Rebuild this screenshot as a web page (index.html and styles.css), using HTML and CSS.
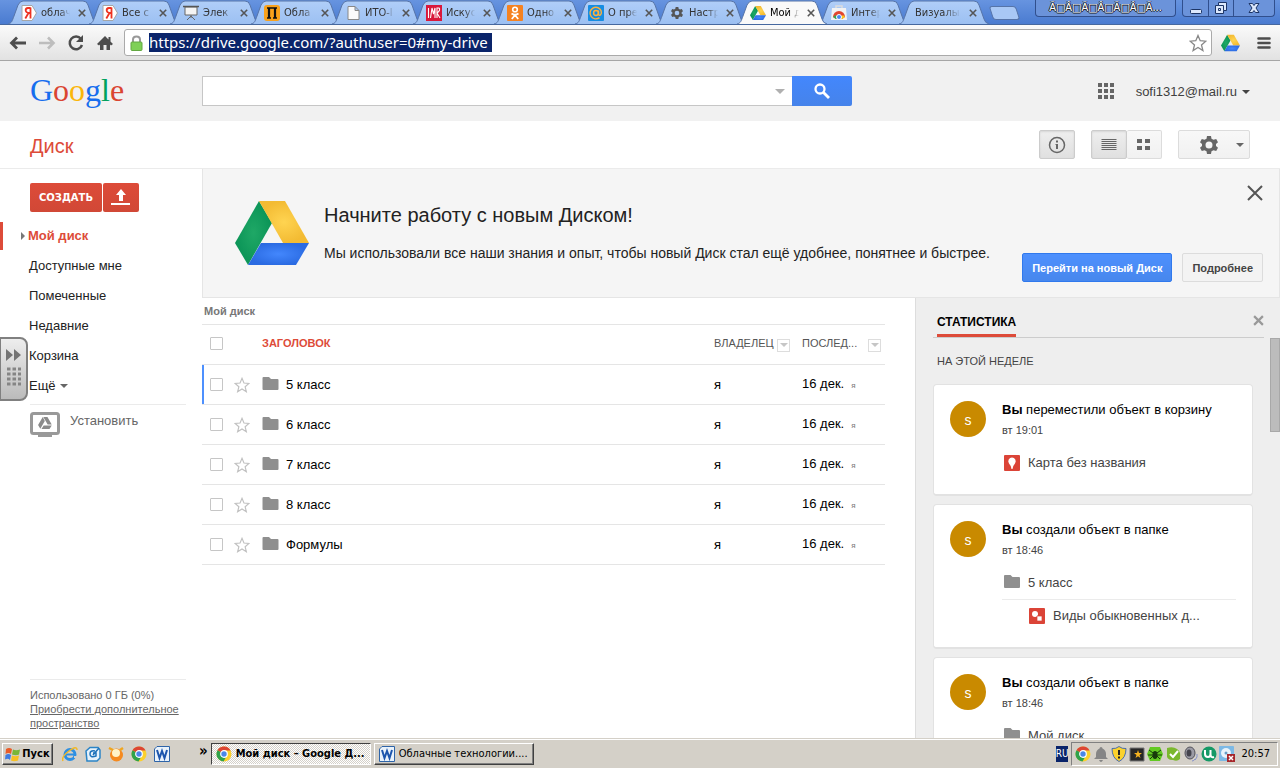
FILE: index.html
```html
<!DOCTYPE html>
<html lang="ru">
<head>
<meta charset="utf-8">
<title>Мой диск – Google Диск</title>
<link rel="stylesheet" href="styles.css">
</head>
<body>
<svg class="defs" aria-hidden="true">
  <defs>
    <linearGradient id="tabFill" x1="0" y1="0" x2="0" y2="1"><stop offset="0" stop-color="#b0cef8"/><stop offset="1" stop-color="#9cc0f2"/></linearGradient>
    <radialGradient id="driveGreen"><stop offset="0" stop-color="#1fa866"/><stop offset="1" stop-color="#0b9457"/></radialGradient>
    <radialGradient id="driveYellow"><stop offset="0" stop-color="#ffd451"/><stop offset="1" stop-color="#f3bb33"/></radialGradient>
    <radialGradient id="driveBlue"><stop offset="0" stop-color="#4387fd"/><stop offset="1" stop-color="#2b6be2"/></radialGradient>
  </defs>
  <symbol id="tab" viewBox="0 0 90 24" preserveAspectRatio="none"><path d="M0 24C4 23 4 21 6 16L10 5Q12 1 15 1H75Q79 1 80 5L85 19Q86 23 90 24" stroke="#5674a8"/></symbol>
  <symbol id="drive" viewBox="0 0 74 64">
    <path d="M24 0L0 42L13 64L37 22Z" fill="url(#driveGreen)"/>
    <path d="M24 0H50L74 42H48Z" fill="url(#driveYellow)"/>
    <path d="M26 42H74L61 64H13Z" fill="url(#driveBlue)"/>
  </symbol>
  <symbol id="driveMono" viewBox="0 0 74 64"><path d="M25 0L0 42L12 63L36 21ZM28 0H50L73 40H51ZM30 45H73L61 64H18Z"/></symbol>
  <symbol id="yandex" viewBox="0 0 16 16"><path d="M1 .5H11L15.500 8L11 15.500H1Z" fill="#fff" stroke="#a6a6a6"/><path d="M9.500 2.500V13.500M9.500 3H7Q4.500 3.300 4.700 5.500Q5 8 9 8M7.500 8L4.300 13.500" fill="none" stroke="#e32" stroke-width="1.800"/></symbol>
  <symbol id="board" viewBox="0 0 16 16"><path d="M2 2H14V10H2Z" fill="#f4f4f4" stroke="#666"/><path d="M0 1.500H16" stroke="#555" stroke-width="1.500"/><path d="M8 10V13M8 11L4 15M8 11L12 15" stroke="#666" fill="none"/></symbol>
  <symbol id="pi" viewBox="0 0 16 16"><rect width="16" height="16" rx="3" fill="#f9a11b"/><path d="M3 3H13M3 13H7M9 13H13" stroke="#111" stroke-width="1.300"/><path d="M5 3V13M11 3V13" stroke="#111" stroke-width="2.200"/></symbol>
  <symbol id="page" viewBox="0 0 16 16"><path d="M3 1.500H10L14 5.500V14.500H3ZM10 1.500V5.500H14" fill="#fafafa" stroke="#888"/></symbol>
  <symbol id="imr" viewBox="0 0 16 16"><rect width="16" height="16" fill="#d9183b"/><path d="M2.500 3V13M4.500 13L6 3L7.500 9L9 3V13M11 13V3H13Q15 5 11 8L14 13" fill="none" stroke="#fff" stroke-width="1.100"/></symbol>
  <symbol id="ok" viewBox="0 0 16 16"><rect width="16" height="16" rx="1" fill="#f58220"/><circle cx="8" cy="4.500" r="2.300" fill="none" stroke="#fff" stroke-width="1.600"/><path d="M4.500 8.500Q8 11 11.500 8.500M8 10L4.800 14M8 10L11.200 14" fill="none" stroke="#fff" stroke-width="1.800"/></symbol>
  <symbol id="at" viewBox="0 0 16 16"><rect width="16" height="16" rx="1" fill="#168de2"/><circle cx="8" cy="8" r="2.400" fill="none" stroke="#ffb13c" stroke-width="1.500"/><path d="M10.500 5.500V9Q11 11 12.500 10Q14 8 13 5.500A5.800 5.800 0 1 0 11.500 12.600" fill="none" stroke="#ffb13c" stroke-width="1.400"/></symbol>
  <symbol id="gear" viewBox="0 0 18 18"><path fill-rule="evenodd" d="M7 0H11L11.500 2.700L13.500 3.800L16.200 2.900L18 6.200L16 8V10L18 11.800L16.200 15.100L13.500 14.200L11.500 15.300L11 18H7L6.500 15.300L4.500 14.200L1.800 15.100L0 11.800L2 10V8L0 6.200L1.800 2.900L4.500 3.800L6.500 2.700ZM9 5.500A3.500 3.500 0 1 0 9 12.500A3.500 3.500 0 1 0 9 5.500Z"/></symbol>
  <symbol id="store" viewBox="0 0 16 16"><path d="M5 3V1H11V3" fill="none" stroke="#ddd" stroke-width="1.500"/><path d="M1 3H15L16 15H0Z" fill="#f2f2f2"/><path d="M2 12A6 6 0 0 1 14 12L11 14H5Z" fill="#e2452f"/><path d="M2 12L5 14H8L5 10Z" fill="#35a854"/><path d="M14 12L11 14H8L12 10Z" fill="#fbc816"/><circle cx="8" cy="12" r="2.500" fill="#4688f1" stroke="#fff"/></symbol>
  <symbol id="cross" viewBox="0 0 10 10"><path d="M1 1L9 9M9 1L1 9" fill="none" stroke="currentColor" stroke-width="2"/></symbol>
  <symbol id="star" viewBox="0 0 18 18"><path d="M9 1.500L11.200 6.700L16.800 7.200L12.500 10.900L13.900 16.500L9 13.500L4.100 16.500L5.500 10.900L1.200 7.200L6.800 6.700Z" fill="none" stroke="currentColor" stroke-width="1.300"/></symbol>
  <symbol id="folder" viewBox="0 0 16 13"><path d="M0 1Q0 0 1 0H6.500L8.500 2H15Q16 2 16 3V12Q16 13 15 13H1Q0 13 0 12Z" fill="#8f8f8f"/></symbol>
  <symbol id="chrome" viewBox="0 0 16 16"><circle cx="8" cy="8" r="7.500" fill="#fbd02c"/><path d="M8 8L1.500 4.200A7.500 7.500 0 0 1 14.600 4.500H8Z" fill="#dc4634"/><path d="M8 8L1.500 4.200A7.500 7.500 0 0 0 7.500 15.500L11 9.500Z" fill="#2fa24b"/><circle cx="8" cy="8" r="3.300" fill="#4a87e8" stroke="#fff" stroke-width="1.200"/></symbol>
  <symbol id="word" viewBox="0 0 16 16"><path d="M3 .5H15.500V15.500H.5V3Z" fill="#e9f2fb" stroke="#2e64a8"/><path d="M3 4L5.500 12L8 5L10.500 12L13 4" fill="none" stroke="#1c55ad" stroke-width="2"/></symbol>
  <symbol id="winflag" viewBox="0 0 16 16"><path d="M1 3Q4 1 7 3L6 8Q3.500 6 .5 8Z" fill="#ea5b27"/><path d="M8 3.500Q11 5 15 3.500L14 8.500Q11 10 7 8.500Z" fill="#79b637"/><path d="M.5 9Q3.500 7 6 9L5 14Q3 12 0 13.500Z" fill="#3f7be0"/><path d="M7 9.500Q10 11 14 9.500L13 14.500Q9 16 6 14.500Z" fill="#f8c022"/></symbol>
</svg>

<header class="browser">
  <div class="titlebar">
    <nav class="tabs" aria-label="Вкладки">
      <div class="tab"><svg class="tab-shape"><use href="#tab"/></svg><svg class="fav"><use href="#yandex"/></svg><span class="tab-text">облач</span><button class="tab-close" aria-label="Закрыть"><svg><use href="#cross"/></svg></button></div>
      <div class="tab"><svg class="tab-shape"><use href="#tab"/></svg><svg class="fav"><use href="#yandex"/></svg><span class="tab-text">Все с</span><button class="tab-close" aria-label="Закрыть"><svg><use href="#cross"/></svg></button></div>
      <div class="tab"><svg class="tab-shape"><use href="#tab"/></svg><svg class="fav"><use href="#board"/></svg><span class="tab-text">Элек</span><button class="tab-close" aria-label="Закрыть"><svg><use href="#cross"/></svg></button></div>
      <div class="tab"><svg class="tab-shape"><use href="#tab"/></svg><svg class="fav"><use href="#pi"/></svg><span class="tab-text">Обла</span><button class="tab-close" aria-label="Закрыть"><svg><use href="#cross"/></svg></button></div>
      <div class="tab"><svg class="tab-shape"><use href="#tab"/></svg><svg class="fav"><use href="#page"/></svg><span class="tab-text">ИТО-I</span><button class="tab-close" aria-label="Закрыть"><svg><use href="#cross"/></svg></button></div>
      <div class="tab"><svg class="tab-shape"><use href="#tab"/></svg><svg class="fav"><use href="#imr"/></svg><span class="tab-text">Искус</span><button class="tab-close" aria-label="Закрыть"><svg><use href="#cross"/></svg></button></div>
      <div class="tab"><svg class="tab-shape"><use href="#tab"/></svg><svg class="fav"><use href="#ok"/></svg><span class="tab-text">Одно</span><button class="tab-close" aria-label="Закрыть"><svg><use href="#cross"/></svg></button></div>
      <div class="tab"><svg class="tab-shape"><use href="#tab"/></svg><svg class="fav"><use href="#at"/></svg><span class="tab-text">О пре</span><button class="tab-close" aria-label="Закрыть"><svg><use href="#cross"/></svg></button></div>
      <div class="tab"><svg class="tab-shape"><use href="#tab"/></svg><svg class="fav fav-gear"><use href="#gear"/></svg><span class="tab-text">Настр</span><button class="tab-close" aria-label="Закрыть"><svg><use href="#cross"/></svg></button></div>
      <div class="tab active"><svg class="tab-shape"><use href="#tab"/></svg><svg class="fav"><use href="#drive"/></svg><span class="tab-text">Мой д</span><button class="tab-close" aria-label="Закрыть"><svg><use href="#cross"/></svg></button></div>
      <div class="tab"><svg class="tab-shape"><use href="#tab"/></svg><svg class="fav"><use href="#store"/></svg><span class="tab-text">Интер</span><button class="tab-close" aria-label="Закрыть"><svg><use href="#cross"/></svg></button></div>
      <div class="tab"><svg class="tab-shape"><use href="#tab"/></svg><span class="tab-text wide">Визуалы</span><button class="tab-close" aria-label="Закрыть"><svg><use href="#cross"/></svg></button></div>
      <button class="new-tab" aria-label="Новая вкладка"></button>
    </nav>
    <button class="profile">Ã□Â□Ã□Â□Ã□Â□Ã...</button>
    <div class="window-buttons">
      <button aria-label="Свернуть"><svg viewBox="0 0 14 14"><rect x="1.500" y="8.500" width="11" height="4" rx="1" fill="#dce8fc" stroke="#1d3566"/></svg></button>
      <button aria-label="Восстановить"><svg viewBox="0 0 14 14"><path d="M4.500 1.500H12.500V9.500H9.500V12.500H1.500V4.500H4.500Z" fill="#dce8fc" stroke="#1d3566"/><path d="M4.500 4.500H9.500V9.500M4.500 7.500H6.500V9.500H4.500Z" fill="none" stroke="#1d3566"/></svg></button>
      <button class="close-window" aria-label="Закрыть окно"><svg viewBox="0 0 14 14"><path d="M2 2.500H5.500L7 4.500L8.500 2.500H12L9 7L12 11.500H8.500L7 9.500L5.500 11.500H2L5 7Z" fill="#dce8fc" stroke="#1d3566"/></svg></button>
    </div>
  </div>
  <div class="toolbar">
    <button class="nav-button" aria-label="Назад"><svg viewBox="0 0 18 18"><path d="M17 9H3M8 3.500L2.500 9L8 14.500" fill="none" stroke="#4d4d4d" stroke-width="2.800"/></svg></button>
    <button class="nav-button" aria-label="Вперёд"><svg viewBox="0 0 18 18"><path d="M1 9H15M10 3.500L15.500 9L10 14.500" fill="none" stroke="#bdbdbd" stroke-width="2.600"/></svg></button>
    <button class="nav-button" aria-label="Обновить"><svg viewBox="0 0 18 18"><path d="M14 5A6.300 6.300 0 1 0 15 11" fill="none" stroke="#4d4d4d" stroke-width="2.500"/><path d="M16 1V8H9Z" fill="#4d4d4d"/></svg></button>
    <button class="nav-button" aria-label="Домой"><svg viewBox="0 0 18 18"><path d="M9 2L1 10L3 11.500L4 10.500V16H7.500V11H10.500V16H14V10.500L15 11.500L17 10L14.500 7.500V3H12.500V5.500Z" fill="#4d4d4d"/></svg></button>
    <form class="omnibox">
      <svg class="lock" viewBox="0 0 13 16"><path d="M3 8V4.500Q3 1.500 6.500 1.500Q10 1.500 10 4.500V8" fill="none" stroke="#999" stroke-width="2"/><rect x="1" y="7" width="11" height="8.500" rx="1" fill="#7fd057" stroke="#63a842"/></svg>
      <a class="url" href="#my-drive">https://drive.google.com/?authuser=0#my-drive</a>
      <button type="button" class="bookmark" aria-label="Закладка"><svg><use href="#star"/></svg></button>
    </form>
    <button class="ext" aria-label="Google Диск"><svg><use href="#drive"/></svg></button>
    <button class="menu" aria-label="Меню"><svg viewBox="0 0 14 14"><path d="M1.500 2.500H12.500M1.500 7H12.500M1.500 11.500H12.500" stroke="#4d4d4d" stroke-width="2.600" stroke-linecap="round"/></svg></button>
  </div>
</header>

<div class="google-bar">
  <a class="logo" href="#google" aria-label="Google"><span class="g-blue">G</span><span class="g-red">o</span><span class="g-yellow">o</span><span class="g-blue">g</span><span class="g-green">l</span><span class="g-red">e</span></a>
  <form class="search">
    <div class="search-box"><input type="text" aria-label="Поиск на Диске"><button type="button" class="search-options" aria-label="Параметры поиска"><span class="caret"></span></button></div>
    <button type="button" class="search-go" aria-label="Поиск"><svg viewBox="0 0 16 16"><circle cx="6" cy="6" r="4.500" fill="none" stroke="#fff" stroke-width="2.300"/><path d="M9.500 9.500L15 15" stroke="#fff" stroke-width="2.800"/></svg></button>
  </form>
  <div class="account">
    <button aria-label="Приложения"><svg class="apps" viewBox="0 0 16 16"><path d="M0 0H4V4H0ZM6 0H10V4H6ZM12 0H16V4H12ZM0 6H4V10H0ZM6 6H10V10H6ZM12 6H16V10H12ZM0 12H4V16H0ZM6 12H10V16H6ZM12 12H16V16H12Z" fill="#666"/></svg></button>
    <button class="email">sofi1312@mail.ru <span class="caret dark"></span></button>
  </div>
</div>

<div class="title-row">
  <h1>Диск</h1>
  <div class="tools">
    <button class="tool pressed" aria-label="Информация"><svg viewBox="0 0 18 18"><circle cx="9" cy="9" r="7.500" fill="none" stroke="#666" stroke-width="1.500"/><path d="M8 4.500H10V6.500H8ZM7.500 8H10V13H8V9H7.500Z" fill="#666"/></svg></button>
    <div class="tool-pair">
      <button class="tool pressed" aria-label="Список"><svg viewBox="0 0 18 18"><path d="M1.500 3.500H16.500M1.500 5.500H16.500M1.500 7.500H16.500M1.500 9.500H16.500M1.500 11.500H16.500M1.500 13.500H16.500" stroke="#666"/></svg></button>
      <button class="tool" aria-label="Сетка"><svg viewBox="0 0 18 18"><path d="M2 3H7V7H2ZM10 3H15V7H10ZM2 10H7V14H2ZM10 10H15V14H10Z" fill="#666"/></svg></button>
    </div>
    <button class="tool settings" aria-label="Настройки"><svg fill="#666"><use href="#gear"/></svg><span class="caret mid"></span></button>
  </div>
</div>

<div class="workspace">
  <aside class="sidebar">
    <div class="create-row">
      <button class="red create">СОЗДАТЬ</button>
      <button class="red upload" aria-label="Загрузить"><svg viewBox="0 0 20 18"><path d="M10 0L15 6H12V12H8V6H5ZM0 14H19V16H0Z" fill="#fff"/></svg></button>
    </div>
    <nav class="folders">
      <a class="current" href="#my"><span class="expander"></span>Мой диск</a>
      <a href="#shared">Доступные мне</a>
      <a href="#starred">Помеченные</a>
      <a href="#recent">Недавние</a>
      <a href="#trash">Корзина</a>
      <a href="#more">Ещё <span class="caret mid"></span></a>
    </nav>
    <a class="install" href="#install"><svg viewBox="0 0 30 26"><rect x="1.500" y="1.500" width="27" height="20" rx="2" fill="#fff" stroke="#999" stroke-width="3"/><path d="M12 22H18V23H22V25H8V23H12Z" fill="#999"/><use href="#driveMono" x="8" y="5" width="14" height="12" fill="#8a8a8a"/></svg>Установить</a>
    <div class="quota">Использовано 0 ГБ (0%)<br><a href="#buy">Приобрести дополнительное пространство</a></div>
    <button class="drawer" aria-label="Панель"><svg viewBox="0 0 28 64"><path d="M6 12L13 18L6 24ZM14 12L21 18L14 24Z" fill="#747474"/><path d="M7 32H21M7 37H21M7 42H21M7 47H21" stroke="#858585" stroke-width="3" stroke-dasharray="3.500 2"/></svg></button>
  </aside>

  <div class="main">
    <section class="promo">
      <svg class="promo-logo"><use href="#drive"/></svg>
      <div class="promo-text"><h2>Начните работу с новым Диском!</h2><p>Мы использовали все наши знания и опыт, чтобы новый Диск стал ещё удобнее, понятнее и быстрее.</p></div>
      <div class="promo-side">
        <button class="promo-close" aria-label="Закрыть"><svg viewBox="0 0 16 16"><path d="M1 1L15 15M15 1L1 15" stroke="#555" stroke-width="2"/></svg></button>
        <div class="promo-buttons"><button class="blue">Перейти на новый Диск</button><button class="plain">Подробнее</button></div>
      </div>
    </section>
    <div class="columns">
      <main class="files">
        <div class="crumb">Мой диск</div>
        <table>
          <colgroup><col class="c-check"><col class="c-star"><col><col class="c-owner"><col class="c-date"></colgroup>
          <thead><tr><th><input type="checkbox" aria-label="Выбрать все"></th><th></th><th class="heading">ЗАГОЛОВОК</th><th><span class="sort">ВЛАДЕЛЕЦ<button aria-label="Сортировать по владельцу"><span class="caret"></span></button></span></th><th><span class="sort">ПОСЛЕД...<button aria-label="Сортировать по дате"><span class="caret"></span></button></span></th></tr></thead>
          <tbody>
            <tr class="focused"><td><input type="checkbox" aria-label="5 класс"></td><td><button class="star" aria-label="Пометить"><svg><use href="#star"/></svg></button></td><td><a class="file" href="#5"><svg><use href="#folder"/></svg>5 класс</a></td><td>я</td><td><span class="date">16 дек. <small>я</small></span></td></tr>
            <tr><td><input type="checkbox" aria-label="6 класс"></td><td><button class="star" aria-label="Пометить"><svg><use href="#star"/></svg></button></td><td><a class="file" href="#6"><svg><use href="#folder"/></svg>6 класс</a></td><td>я</td><td><span class="date">16 дек. <small>я</small></span></td></tr>
            <tr><td><input type="checkbox" aria-label="7 класс"></td><td><button class="star" aria-label="Пометить"><svg><use href="#star"/></svg></button></td><td><a class="file" href="#7"><svg><use href="#folder"/></svg>7 класс</a></td><td>я</td><td><span class="date">16 дек. <small>я</small></span></td></tr>
            <tr><td><input type="checkbox" aria-label="8 класс"></td><td><button class="star" aria-label="Пометить"><svg><use href="#star"/></svg></button></td><td><a class="file" href="#8"><svg><use href="#folder"/></svg>8 класс</a></td><td>я</td><td><span class="date">16 дек. <small>я</small></span></td></tr>
            <tr><td><input type="checkbox" aria-label="Формулы"></td><td><button class="star" aria-label="Пометить"><svg><use href="#star"/></svg></button></td><td><a class="file" href="#f"><svg><use href="#folder"/></svg>Формулы</a></td><td>я</td><td><span class="date">16 дек. <small>я</small></span></td></tr>
          </tbody>
        </table>
      </main>
      <aside class="stats">
        <div class="stats-head"><h3>СТАТИСТИКА</h3><button aria-label="Закрыть"><svg><use href="#cross"/></svg></button></div>
        <div class="stats-body">
          <div class="stats-list">
            <h4>НА ЭТОЙ НЕДЕЛЕ</h4>
            <article class="card"><span class="avatar">s</span><div class="event"><p><b>Вы</b> переместили объект в корзину</p><time>вт 19:01</time>
              <a class="item" href="#map"><svg viewBox="0 0 16 16"><rect width="16" height="16" rx="1" fill="#db4437"/><path d="M8 2.500A3.800 3.800 0 0 1 11 8.500Q9 10.500 8.500 14H7.500Q7 10.500 5 8.500A3.800 3.800 0 0 1 8 2.500Z" fill="#fff"/></svg>Карта без названия</a></div></article>
            <article class="card"><span class="avatar">s</span><div class="event"><p><b>Вы</b> создали объект в папке</p><time>вт 18:46</time>
              <a class="item" href="#5"><svg class="folder"><use href="#folder"/></svg>5 класс</a>
              <a class="item nested" href="#draw"><svg viewBox="0 0 16 16"><rect width="16" height="16" rx="1" fill="#db4437"/><circle cx="6" cy="6" r="3" fill="#fff"/><path d="M8 8H13V13H8Z" fill="#fff" stroke="#db4437" stroke-width=".7"/></svg>Виды обыкновенных д...</a></div></article>
            <article class="card"><span class="avatar">s</span><div class="event"><p><b>Вы</b> создали объект в папке</p><time>вт 18:46</time>
              <a class="item" href="#my"><svg class="folder"><use href="#folder"/></svg>Мой диск</a></div></article>
          </div>
          <div class="scroll-thumb"></div>
        </div>
      </aside>
    </div>
  </div>
</div>

<footer class="taskbar">
  <button class="raised start"><svg><use href="#winflag"/></svg>Пуск</button>
  <div class="quick">
    <button aria-label="Internet Explorer"><svg viewBox="0 0 16 16"><circle cx="8" cy="8.500" r="5" fill="none" stroke="#2d8fe3" stroke-width="3"/><path d="M4 8.500H14" stroke="#2d8fe3" stroke-width="2"/><path d="M12 10H16V12H12Z" fill="#d4d0c8"/><path d="M1 15Q-1 11 7 5Q15 -1 15 4" fill="none" stroke="#f2b92b" stroke-width="1.500"/></svg></button>
    <button aria-label="Рабочий стол"><svg viewBox="0 0 16 16"><path d="M1 5L5 1.500H13L15 4V12L12 15H2Z" fill="#e6f2fb" stroke="#2b84c6" stroke-width="1.500"/><path d="M10 5Q5 4 5 8Q5 12 11 10V7H8M8 9L14 2" fill="none" stroke="#1c72bb" stroke-width="1.500"/></svg></button>
    <button aria-label="Почта"><svg viewBox="0 0 16 16"><circle cx="8.500" cy="9" r="6.500" fill="#f58a1f"/><circle cx="8" cy="7" r="4" fill="#fff3c8"/><path d="M1 2L5 4M15 2L12 4" stroke="#f0a51e" stroke-width="2.500"/></svg></button>
    <button aria-label="Chrome"><svg><use href="#chrome"/></svg></button>
    <button aria-label="Word"><svg><use href="#word"/></svg></button>
  </div>
  <button class="more" aria-label="Ещё значки">»</button>
  <button class="window-task sunken"><svg><use href="#chrome"/></svg><span>Мой диск – Google Д...</span></button>
  <button class="window-task raised"><svg><use href="#word"/></svg><span>Облачные технологии....</span></button>
  <span class="lang">RU</span>
  <div class="tray">
    <svg><use href="#chrome"/></svg>
    <svg viewBox="0 0 16 16"><path d="M8 1Q9.500 1 9.500 2.500Q13 4 13 8V11L15 13H1L3 11V8Q3 4 6.500 2.500Q6.500 1 8 1ZM6 14H10Q9 16 8 16Q7 16 6 14Z" fill="#858585"/></svg>
    <svg viewBox="0 0 16 16"><path d="M8 .5Q11 3 15 2.500Q15 12 8 15.500Q1 12 1 2.500Q5 3 8 .5Z" fill="#fbd22c" stroke="#4a6da8"/><path d="M8 4V9M8 10.500V12.500" stroke="#222" stroke-width="2"/></svg>
    <svg viewBox="0 0 16 16"><path d="M1 2H15V15H1Z" fill="#272727" stroke="#777"/><path d="M9 4L10 7H13L10.500 9L11.500 12L9 10.300L6.500 12L7.500 9L5 7H8Z" fill="#f7b31e"/></svg>
    <svg viewBox="0 0 16 16"><path d="M3 1H13L16 8L13 15H3L0 8Z" fill="#62c922"/><ellipse cx="8" cy="9" rx="2.500" ry="4" fill="#173b0b"/><path d="M2 4L6 7M14 4L10 7M1 9H15M3 13L6 10M13 13L10 10" stroke="#173b0b"/></svg>
    <svg viewBox="0 0 16 16"><path d="M2 2Q8 0 12 3Q16 5 15 13Q12 16 8 14Q1 14 2 8Z" fill="#7bb82f"/><path d="M5 8L8 11L13 5" fill="none" stroke="#fff" stroke-width="2"/></svg>
    <svg viewBox="0 0 16 16"><ellipse cx="7" cy="7" rx="5" ry="6" fill="#9b9ba5" stroke="#51515a"/><ellipse cx="6" cy="7" rx="2.500" ry="3.500" fill="#44444d"/><path d="M12 14Q15 11 14 8M9 15Q11 15 12 13" fill="none" stroke="#8390c8"/></svg>
    <svg viewBox="0 0 16 16"><circle cx="8" cy="8" r="7.500" fill="#159966"/><path d="M4 4V8Q4 11 7 11Q9.500 11 9.500 8V4M9.500 9Q10 12 13 11" fill="none" stroke="#fff" stroke-width="2"/></svg>
    <svg viewBox="0 0 16 16"><rect width="15" height="15" rx="1" fill="#7db9e5"/><circle cx="7" cy="7" r="5" fill="#e8f3fb"/><circle cx="7" cy="7" r="1.500" fill="#679fc7"/><path d="M8 8H16V16H8Z" fill="#a6272b"/><path d="M10 10L14 14M14 10L10 14" stroke="#fff" stroke-width="1.500"/></svg>
    <time>20:57</time>
  </div>
</footer>
</body>
</html>
```

FILE: styles.css
```css
* { box-sizing: border-box; }
html, body { height: 100%; }
body {
  margin: 0;
  display: flex;
  flex-direction: column;
  overflow: hidden;
  background: #fff;
  color: #222;
  font: 13px/20px "Liberation Sans", Arial, sans-serif;
}
button {
  display: inline-flex;
  align-items: center;
  justify-content: center;
  margin: 0;
  padding: 0;
  border: 0;
  background: none;
  color: inherit;
  font: inherit;
  white-space: nowrap;
}
a { color: inherit; text-decoration: none; }
svg { display: block; flex: none; width: 16px; height: 16px; }
h1, h2, h3, h4, p { margin: 0; font-weight: normal; }
.defs { position: absolute; width: 0; height: 0; }
.caret {
  display: inline-block;
  border: 5px solid transparent;
  border-top-color: #b0b0b0;
  border-bottom: 0;
}
.caret.dark, .caret.mid { border-width: 4px 4px 0; border-top-color: #444; }
.caret.mid { border-top-color: #666; }

/* Browser frame */
.browser { flex: none; font-family: "DejaVu Sans Condensed", "DejaVu Sans", sans-serif; }
.titlebar {
  display: flex;
  align-items: flex-start;
  height: 25px;
  padding: 0 5px 0 8px;
  background: linear-gradient(#6794e0, #4a7bd0);
  border-bottom: 1px solid #46689f;
}
.tabs { display: flex; flex: 1; min-width: 0; height: 24px; }
.tab {
  display: flex;
  align-items: center;
  position: relative;
  flex: 0 1 90px;
  min-width: 0;
  margin-right: -9px;
  padding: 2px 12px 0 13px;
  color: #333;
  font-size: 11px;
}
.tab-shape { position: absolute; top: 0; left: 0; width: 100%; height: 24px; fill: url(#tabFill); }
.tab.active { z-index: 1; color: #000; }
.active .tab-shape { fill: #f9f9f9; }
.fav { position: relative; margin-right: 4px; }
.fav-gear { fill: #555; transform: scale(.75); }
.tab-text {
  position: relative;
  flex: 1;
  min-width: 0;
  overflow: hidden;
  white-space: nowrap;
  mask-image: linear-gradient(90deg, #000 65%, transparent);
}
.tab-text.wide { padding-left: 3px; }
.tab-close { position: relative; margin-left: 8px; color: #555; }
.tab-close svg { width: 8px; height: 8px; }
.new-tab {
  width: 27px;
  height: 14px;
  margin: 6px 0 0 11px;
  border: 1px solid #5674a8;
  border-radius: 3px;
  background: #a9c8f5;
  transform: skewX(18deg);
}
.profile, .window-buttons {
  border: 1px solid #304f8d;
  border-top: 0;
  border-radius: 0 0 4px 4px;
  background: #6b93da;
}
.profile { width: 141px; height: 17px; color: #fff; font-size: 11px; text-shadow: 1px 0 #222, -1px 0 #222, 0 1px #222; }
.window-buttons { display: flex; height: 17px; margin-left: 6px; }
.window-buttons button { width: 25px; }
.window-buttons button + button { border-left: 1px solid #304f8d; }
.window-buttons .close-window { width: 41px; }
.window-buttons svg { width: 14px; height: 14px; }
.toolbar {
  display: flex;
  align-items: center;
  height: 36px;
  padding: 0 9px 0 8px;
  background: linear-gradient(#fafafa, #e2e2e2);
  border-bottom: 1px solid #a6a6a6;
}
.nav-button { width: 29px; height: 26px; padding-right: 10px; }
.nav-button svg { width: 18px; height: 18px; }
.omnibox {
  display: flex;
  align-items: center;
  flex: 1;
  min-width: 0;
  height: 27px;
  padding: 0 4px 0 5px;
  background: #fff;
  border: 1px solid #aaa;
  border-radius: 3px;
}
.lock { width: 13px; height: 16px; margin-right: 6px; }
.url { padding-right: 4px; background: #0a246a; color: #fff; font: 15px/19px "Noto Sans", sans-serif; white-space: nowrap; }
.bookmark { margin-left: auto; color: #888; }
.bookmark svg { width: 18px; height: 18px; }
.ext { margin: 0 17px 0 9px; }
.ext svg { width: 19px; height: 18px; }
.menu svg { width: 14px; height: 14px; }

/* Google header */
.google-bar { display: flex; flex: none; align-items: center; height: 60px; padding: 0 30px; background: #f1f1f1; }
.logo { flex: none; width: 172px; padding-bottom: 2px; font: 32px/36px "Liberation Serif", serif; }
.g-blue { color: #176dee; }
.g-red { color: #da4531; }
.g-yellow { color: #fbb60a; }
.g-green { color: #00a15d; }
.search { display: flex; flex: 0 1 650px; min-width: 0; height: 30px; }
.search-box { display: flex; flex: 1; min-width: 0; background: #fff; border: 1px solid #c6c6c6; border-right: 0; }
.search-box input { flex: 1; min-width: 0; border: 0; outline: 0; background: none; font: inherit; }
.search-options { width: 24px; }
.search-go { width: 60px; border-radius: 0 2px 2px 0; background: linear-gradient(#4387fd, #4683ea); }
.account { display: flex; align-items: center; gap: 22px; margin-left: auto; }
.email { gap: 5px; padding-top: 2px; color: #404040; }
.title-row {
  display: flex;
  flex: none;
  align-items: center;
  justify-content: space-between;
  height: 48px;
  padding: 0 30px;
  border-bottom: 1px solid #ebebeb;
}
h1 { padding-top: 2px; color: #dd4b39; font-size: 20px; line-height: 24px; }
.tools { display: flex; gap: 16px; }
.tool-pair { display: flex; }
.tool { width: 36px; height: 29px; border: 1px solid #dcdcdc; border-radius: 2px; background: linear-gradient(#f8f8f8, #f1f1f1); }
.tool.pressed { border-color: #ccc; background: linear-gradient(#eee, #e0e0e0); box-shadow: inset 0 1px 2px rgba(0, 0, 0, .1); }
.tool svg { width: 18px; height: 18px; }
.tool-pair .tool + .tool { width: 35px; border-left: 0; }
.tool.settings { width: 72px; gap: 18px; padding-left: 16px; }

/* Sidebar */
.workspace { display: flex; flex: 1; min-height: 0; }
.sidebar { display: flex; flex: none; flex-direction: column; position: relative; width: 202px; padding: 14px 16px 8px 0; }
.create-row { display: flex; gap: 1px; padding-left: 30px; }
.red {
  height: 29px;
  border-radius: 2px;
  background: linear-gradient(#dd4b39, #d14836);
  color: #fff;
  font: bold 10px/20px "DejaVu Sans", sans-serif;
}
.create { width: 72px; }
.upload { width: 36px; }
.upload svg { width: 20px; height: 18px; }
.folders { display: flex; flex-direction: column; gap: 2px; margin-top: 10px; }
.folders a { display: flex; align-items: center; gap: 4px; height: 28px; padding-left: 29px; }
.folders .current { gap: 3px; padding-left: 18px; border-left: 3px solid #dd4b39; color: #dd4b39; font-weight: bold; }
.expander { border: 4px solid transparent; border-left: 4px solid #777; border-right: 0; }
.install { display: flex; gap: 10px; margin: 4px 0 0 30px; padding-top: 7px; border-top: 1px solid #ebebeb; color: #666; line-height: 18px; }
.install svg { width: 30px; height: 26px; }
.quota { margin: auto 0 0 30px; padding-top: 8px; border-top: 1px solid #ebebeb; color: #666; font-size: 11px; line-height: 14px; }
.quota a { text-decoration: underline; }
.drawer {
  position: absolute;
  top: 168px;
  left: 0;
  width: 28px;
  height: 64px;
  border: 2px solid #808080;
  border-left-width: 1px;
  border-radius: 0 8px 8px 0;
  background: linear-gradient(#eee, #bbb);
}
.drawer svg { width: 28px; height: 64px; }

/* Promo banner */
.main { display: flex; flex: 1; flex-direction: column; min-width: 0; }
.promo { display: flex; flex: none; height: 129px; padding: 16px 16px 15px 32px; background: #f5f5f5; border: 1px solid #e5e5e5; border-top: 0; }
.promo-logo { width: 74px; height: 64px; margin: 16px 15px 0 0; }
.promo-text { flex: 1; min-width: 0; padding-top: 16px; }
h2 { font-size: 20px; line-height: 28px; }
.promo-text p { margin-top: 14px; font-size: 14px; line-height: 20px; white-space: nowrap; }
.promo-side { display: flex; flex: none; flex-direction: column; align-items: flex-end; justify-content: space-between; }
.promo-buttons { display: flex; gap: 10px; }
.promo-buttons button { height: 29px; padding: 0 9px; border: 1px solid #dcdcdc; border-radius: 2px; background: #f3f3f3; color: #444; font-size: 11px; font-weight: bold; }
.promo-buttons .blue { border-color: #3079ed; background: linear-gradient(#4d90fe, #4787ed); color: #fff; }

/* File list */
.columns { display: flex; flex: 1; min-height: 0; }
.files { flex: 1; min-width: 0; padding-right: 30px; overflow: hidden; }
.crumb { height: 27px; padding-left: 2px; border-bottom: 1px solid #e5e5e5; color: #777; font-size: 11px; font-weight: bold; line-height: 26px; }
table { width: 100%; table-layout: fixed; border-collapse: separate; border-spacing: 0; }
.c-check { width: 26px; }
.c-star { width: 32px; }
.c-owner { width: 88px; }
.c-date { width: 85px; }
th, td { height: 40px; padding: 0 2px; border-bottom: 1px solid #e5e5e5; text-align: left; font-weight: normal; white-space: nowrap; }
td { color: #000; }
th { padding-bottom: 3px; color: #555; font-size: 11px; }
th.heading { color: #dd4b39; font-weight: bold; }
th:first-child, td:first-child { padding-left: 8px; }
.focused td:first-child { box-shadow: inset 2px 0 #4d90fe; }
.files input { display: block; width: 13px; height: 13px; margin: 0; appearance: none; border: 1px solid #c6c6c6; border-radius: 1px; background: #fff; }
.sort { display: flex; align-items: center; justify-content: space-between; padding-right: 8px; }
th:last-child .sort { padding-right: 2px; }
.sort button { width: 13px; height: 13px; margin-top: 4px; border: 1px solid #ddd; }
.sort .caret { border-width: 4px 4px 0; border-top-color: #c6c6c6; }
.star { display: flex; margin-left: 4px; color: #c0c0c0; }
.file { display: flex; align-items: center; gap: 7px; }
.file svg { width: 17px; height: 13px; margin-bottom: 2px; }
.date { display: flex; align-items: baseline; gap: 7px; }
td small { color: #777; font-size: 8px; }

/* Activity panel */
.stats { display: flex; flex: none; flex-direction: column; width: 365px; background: #eee; border-left: 1px solid #ddd; }
.stats-head { display: flex; flex: none; align-items: flex-start; justify-content: space-between; height: 40px; margin: 0 16px 0 17px; padding-left: 4px; border-bottom: 1px solid #ccc; }
h3 { height: 39px; padding-top: 14px; border-bottom: 3px solid #dd4b39; color: #000; font-size: 12px; font-weight: bold; }
.stats-head button { margin-top: 17px; color: #999; }
.stats-head svg { width: 11px; height: 11px; }
.stats-body { display: flex; flex: 1; min-height: 0; justify-content: space-between; overflow: hidden; }
.stats-list { flex: 1; min-width: 0; padding: 13px 17px 0 17px; }
.scroll-thumb { width: 10px; height: 94px; background: #bcbcbc; border: 1px solid #a8a8a8; }
h4 { padding-left: 4px; color: #444; font-size: 11px; line-height: 20px; }
.card { display: flex; gap: 16px; margin-bottom: 8px; padding: 16px 16px 15px; background: #fff; border: 1px solid #e2e2e2; border-bottom-width: 2px; border-radius: 4px; }
h4 + .card { margin-top: 13px; }
.avatar { flex: none; width: 36px; height: 36px; border-radius: 50%; background: #c98a00; color: #fff; font-size: 14px; line-height: 38px; text-align: center; }
.event { flex: 1; min-width: 0; }
.event p { color: #000; line-height: 18px; }
.event time { display: block; margin-top: 3px; color: #444; font-size: 11px; line-height: 16px; }
.item { display: flex; align-items: center; gap: 8px; height: 32px; margin-top: 9px; padding-left: 2px; color: #444; }
.item .folder { height: 13px; margin-bottom: 3px; }
.item.nested { height: 33px; margin-top: 0; padding-left: 27px; border-top: 1px solid #ebebeb; }

/* Taskbar */
.taskbar {
  display: flex;
  flex: none;
  align-items: center;
  position: relative;
  height: 30px;
  padding: 1px 2px 0;
  border-top: 1px solid #d4d0c8;
  background: #d4d0c8;
  box-shadow: inset 0 1px #fff;
  color: #000;
  font: 11px/16px "DejaVu Sans Condensed", "DejaVu Sans", sans-serif;
}
.raised { border: 1px solid; border-color: #fff #404040 #404040 #fff; box-shadow: inset -1px -1px #808080; }
.sunken { border: 1px solid; border-color: #404040 #fff #fff #404040; background: repeating-conic-gradient(#fff 0 25%, #d4d0c8 0 50%) 0 0 / 2px 2px; font-weight: bold; }
.start { width: 51px; height: 22px; gap: 1px; font-weight: bold; }
.quick { display: flex; gap: 7px; margin-left: 9px; }
.more { margin-left: 29px; padding-bottom: 6px; font-size: 15px; font-weight: bold; }
.window-task { flex: 0 1 160px; min-width: 0; height: 22px; gap: 4px; margin-left: 3px; padding: 0 4px; justify-content: flex-start; overflow: hidden; }
.lang { margin-left: auto; background: #0a246a; color: #fff; font-size: 10px; }
.tray { display: flex; align-items: center; gap: 2px; height: 24px; margin-left: 3px; padding: 0 7px 0 3px; border: 1px solid; border-color: #808080 #fff #fff #808080; }
.tray time { margin-left: 4px; }
```
